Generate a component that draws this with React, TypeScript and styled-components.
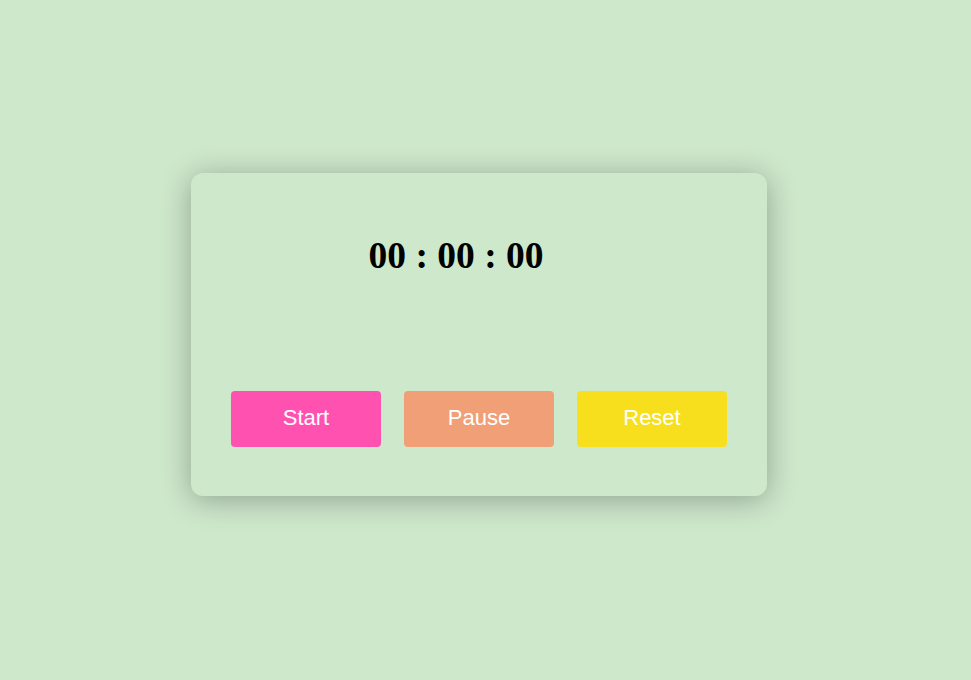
import React from 'react'
import styled, { createGlobalStyle } from 'styled-components'

const GlobalStyle = createGlobalStyle`
  html, body {
    margin: 0;
    padding: 0;
    background: #cee8cc;
  }
`

const Page = styled.div`
  min-height: 100vh;
  box-sizing: border-box;
  padding: 173px 0 0 191px;
`

const Card = styled.div`
  width: 576px;
  height: 323px;
  box-sizing: border-box;
  padding: 61px 40px 49px;
  background: #cee8cc;
  border-radius: 12px;
  box-shadow: 0 4px 30px rgba(0, 0, 0, 0.3);
  display: flex;
  flex-direction: column;
  justify-content: space-between;
`

const Display = styled.div`
  font-family: 'Liberation Serif', 'Times New Roman', serif;
  font-weight: bold;
  font-size: 37.5px;
  color: #000;
  text-align: center;
  padding-right: 46px;
`

const Controls = styled.div`
  display: flex;
  justify-content: space-between;
`

const Button = styled.button<{ $bg: string }>`
  width: 150px;
  height: 56px;
  padding: 0 0 2px;
  border: none;
  border-radius: 4px;
  background: ${(p) => p.$bg};
  color: #fff;
  font-family: 'Liberation Sans', Arial, sans-serif;
  font-size: 22px;
  cursor: pointer;
  &:hover {
    opacity: 0.9;
  }
`

const pad = (n: number) => String(n).padStart(2, '0')

const App: React.FC = () => {
  const [secs, setSecs] = React.useState<number>(0)
  const [running, setRunning] = React.useState<boolean>(false)

  React.useEffect(() => {
    if (!running) return
    const id = setInterval(() => setSecs((s) => s + 1), 1000)
    return () => clearInterval(id)
  }, [running])

  const h = Math.floor(secs / 3600)
  const m = Math.floor((secs % 3600) / 60)
  const s = secs % 60

  return (
    <Page>
      <GlobalStyle />
      <Card>
        <Display>
          {pad(h)} : {pad(m)} : {pad(s)}
        </Display>
        <Controls>
          <Button $bg="#ff52b0" onClick={() => setRunning(true)}>
            Start
          </Button>
          <Button $bg="#f19f76" onClick={() => setRunning(false)}>
            Pause
          </Button>
          <Button
            $bg="#f8df1e"
            onClick={() => {
              setRunning(false)
              setSecs(0)
            }}
          >
            Reset
          </Button>
        </Controls>
      </Card>
    </Page>
  )
}

export default App
